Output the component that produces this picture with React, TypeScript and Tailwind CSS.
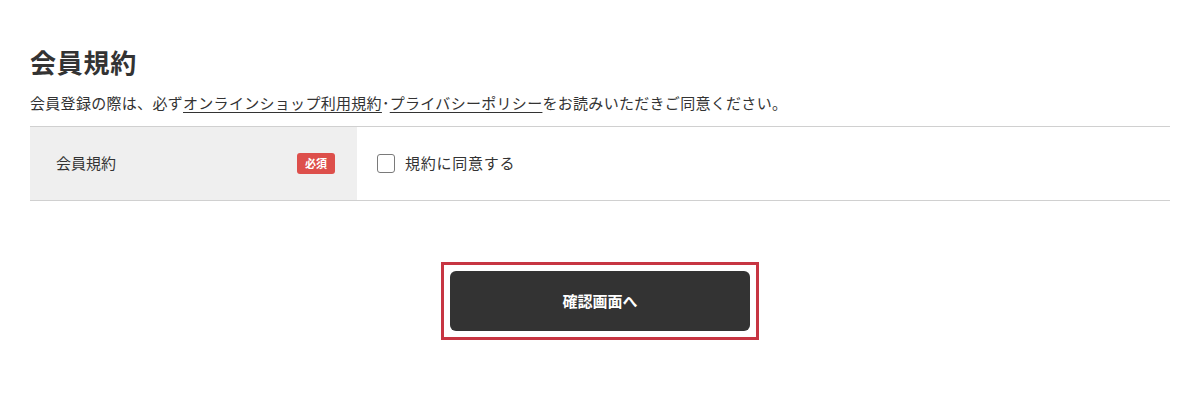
import React from "react";

export default function App() {
  return (
    <div
      className="w-[1200px] h-[411px] bg-white text-[#333]"
      style={{ fontFamily: '"Noto Sans CJK JP", "Noto Sans", sans-serif' }}
    >
      <div className="px-[30px] pt-[44px]">
        <h2 className="text-[26px] leading-[36px] font-bold tracking-[0.03em]">会員規約</h2>
        <p className="mt-[11px] text-[15px] leading-[24px] tracking-[0.02em]">
          会員登録の際は、必ず
          <a href="#" className="underline underline-offset-[3px]">オンラインショップ利用規約</a>
          ･
          <a href="#" className="underline underline-offset-[3px]">プライバシーポリシー</a>
          をお読みいただきご同意ください。
        </p>
        <div className="mt-[11px] border-t border-b border-[#d0d0d0] flex h-[75px]">
          <div className="w-[327px] bg-[#efefef] flex items-center justify-between pl-[26px] pr-[22px]">
            <span className="text-[15px]">会員規約</span>
            <span className="bg-[#dd4f4b] text-white text-[11px] font-bold w-[38px] h-[21px] rounded-[3px] flex items-center justify-center leading-none">
              必須
            </span>
          </div>
          <label className="flex items-center pl-[20px] gap-[10px]">
            <span className="w-[18px] h-[19px] border border-[#7a7a7a] rounded-[3px] bg-white" />
            <span className="text-[15px] tracking-[0.05em]">規約に同意する</span>
          </label>
        </div>
        <div className="flex justify-center mt-[61px]">
          <div className="border-[3px] border-[#c73542] p-[6px]">
            <button className="w-[300px] h-[60px] bg-[#333333] rounded-[6px] text-white text-[15px] font-bold">
              確認画面へ
            </button>
          </div>
        </div>
      </div>
    </div>
  );
}
